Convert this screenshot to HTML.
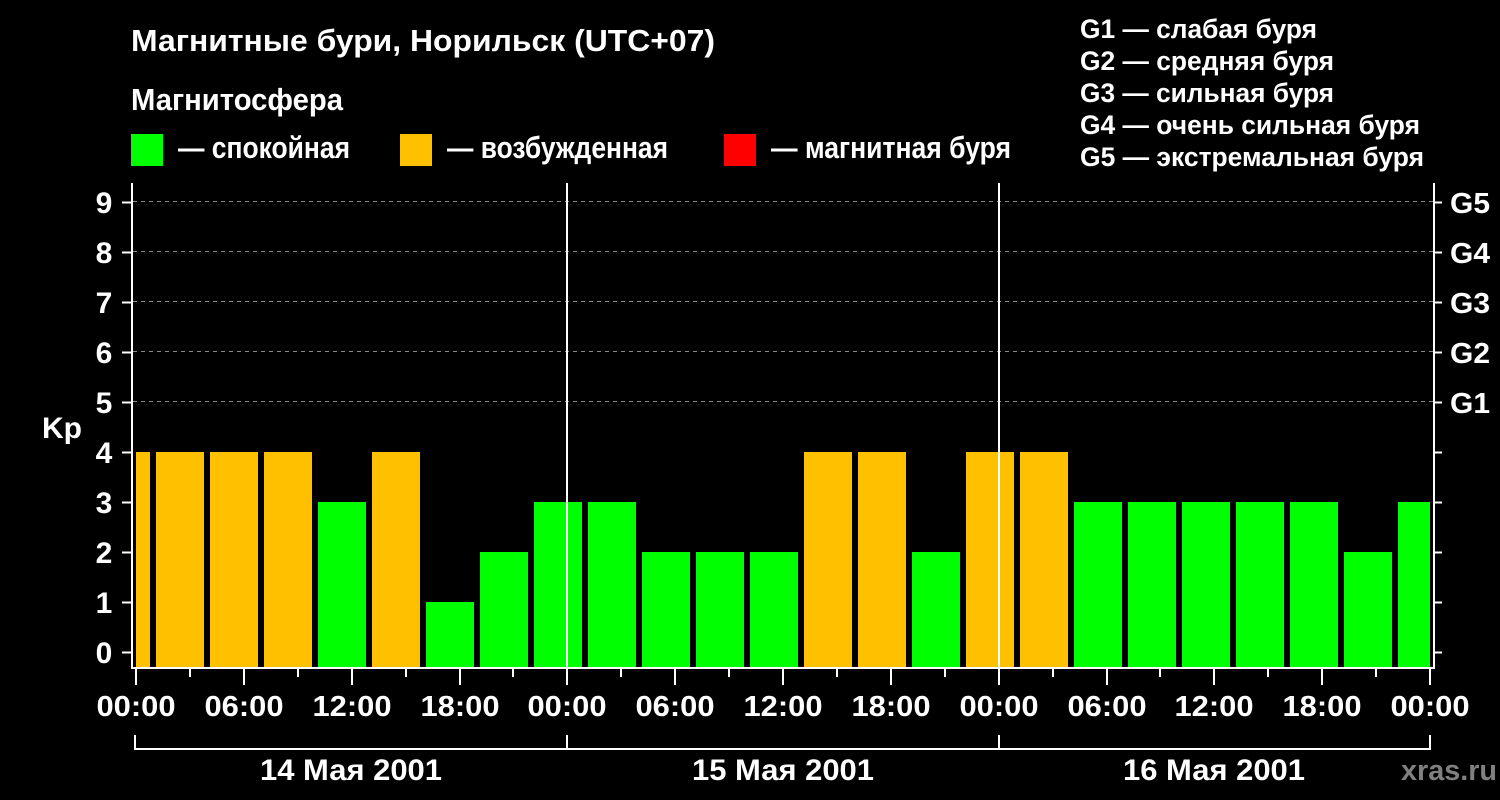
<!DOCTYPE html>
<html><head><meta charset="utf-8"><style>html,body{margin:0;background:#000;}svg{display:block}</style></head><body>
<svg width="1500" height="800" xmlns="http://www.w3.org/2000/svg" font-family="'Liberation Sans', Arial, sans-serif" font-weight="bold">
<rect width="1500" height="800" fill="#000"/>
<g fill="#fff" font-size="31">
<text x="131" y="51" textLength="584" lengthAdjust="spacingAndGlyphs">Магнитные бури, Норильск (UTC+07)</text>
<text x="131" y="110" textLength="212" lengthAdjust="spacingAndGlyphs">Магнитосфера</text>
<text x="178" y="158" textLength="172" lengthAdjust="spacingAndGlyphs">— спокойная</text>
<text x="447" y="158" textLength="221" lengthAdjust="spacingAndGlyphs">— возбужденная</text>
<text x="771" y="158" textLength="240" lengthAdjust="spacingAndGlyphs">— магнитная буря</text>
</g>
<g fill="#fff" font-size="27">
<text x="1080" y="38" textLength="237" lengthAdjust="spacingAndGlyphs">G1 — слабая буря</text>
<text x="1080" y="70" textLength="254" lengthAdjust="spacingAndGlyphs">G2 — средняя буря</text>
<text x="1080" y="102" textLength="254" lengthAdjust="spacingAndGlyphs">G3 — сильная буря</text>
<text x="1080" y="134" textLength="340" lengthAdjust="spacingAndGlyphs">G4 — очень сильная буря</text>
<text x="1080" y="166" textLength="344" lengthAdjust="spacingAndGlyphs">G5 — экстремальная буря</text>
</g>
<rect x="131" y="134" width="32" height="32" fill="#00ff00"/>
<rect x="400" y="134" width="32" height="32" fill="#ffc000"/>
<rect x="724" y="134" width="32" height="32" fill="#ff0000"/>
<g stroke="#888" stroke-dasharray="4,4" stroke-width="1">
<line x1="133" x2="1433" y1="201.5" y2="201.5"/><line x1="133" x2="1433" y1="251.5" y2="251.5"/>
<line x1="133" x2="1433" y1="301.5" y2="301.5"/><line x1="133" x2="1433" y1="351.5" y2="351.5"/>
<line x1="133" x2="1433" y1="401.5" y2="401.5"/>
</g>
<g>
<rect x="136" y="452" width="14" height="215" fill="#ffc000"/>
<rect x="156" y="452" width="48" height="215" fill="#ffc000"/>
<rect x="210" y="452" width="48" height="215" fill="#ffc000"/>
<rect x="264" y="452" width="48" height="215" fill="#ffc000"/>
<rect x="318" y="502" width="48" height="165" fill="#00ff00"/>
<rect x="372" y="452" width="48" height="215" fill="#ffc000"/>
<rect x="426" y="602" width="48" height="65" fill="#00ff00"/>
<rect x="480" y="552" width="48" height="115" fill="#00ff00"/>
<rect x="534" y="502" width="48" height="165" fill="#00ff00"/>
<rect x="588" y="502" width="48" height="165" fill="#00ff00"/>
<rect x="642" y="552" width="48" height="115" fill="#00ff00"/>
<rect x="696" y="552" width="48" height="115" fill="#00ff00"/>
<rect x="750" y="552" width="48" height="115" fill="#00ff00"/>
<rect x="804" y="452" width="48" height="215" fill="#ffc000"/>
<rect x="858" y="452" width="48" height="215" fill="#ffc000"/>
<rect x="912" y="552" width="48" height="115" fill="#00ff00"/>
<rect x="966" y="452" width="48" height="215" fill="#ffc000"/>
<rect x="1020" y="452" width="48" height="215" fill="#ffc000"/>
<rect x="1074" y="502" width="48" height="165" fill="#00ff00"/>
<rect x="1128" y="502" width="48" height="165" fill="#00ff00"/>
<rect x="1182" y="502" width="48" height="165" fill="#00ff00"/>
<rect x="1236" y="502" width="48" height="165" fill="#00ff00"/>
<rect x="1290" y="502" width="48" height="165" fill="#00ff00"/>
<rect x="1344" y="552" width="48" height="115" fill="#00ff00"/>
<rect x="1398" y="502" width="32" height="165" fill="#00ff00"/>
</g>
<g stroke="#fff" stroke-width="2" fill="none">
<polyline points="132,183 132,668 1434,668 1434,183"/>
<line x1="567" y1="183" x2="567" y2="668"/><line x1="999" y1="183" x2="999" y2="668"/>
<polyline points="135,735 135,749 1430,749 1430,735"/>
<line x1="567" y1="735" x2="567" y2="749"/><line x1="999" y1="735" x2="999" y2="749"/>
</g>
<g stroke="#fff" stroke-width="2">
<path d="M122 652.5h10M122 602.5h10M122 552.5h10M122 502.5h10M122 452.5h10M122 402.5h10M122 352.5h10M122 302.5h10M122 252.5h10M122 202.5h10"/>
<path d="M1434 652.5h8M1434 602.5h8M1434 552.5h8M1434 502.5h8M1434 452.5h8M1434 402.5h8M1434 352.5h8M1434 302.5h8M1434 252.5h8M1434 202.5h8"/>
<path d="M136 669v16M244 669v16M352 669v16M460 669v16M567 669v16M675 669v16M783 669v16M891 669v16M999 669v16M1107 669v16M1214 669v16M1322 669v16M1430 669v16"/>
<path d="M190 669v8M298 669v8M406 669v8M513 669v8M621 669v8M729 669v8M837 669v8M945 669v8M1053 669v8M1160 669v8M1268 669v8M1376 669v8"/>
</g>
<g fill="#fff" font-size="30" text-anchor="middle">
<text x="104" y="663">0</text><text x="104" y="613">1</text><text x="104" y="563">2</text><text x="104" y="513">3</text><text x="104" y="463">4</text>
<text x="104" y="413">5</text><text x="104" y="363">6</text><text x="104" y="313">7</text><text x="104" y="263">8</text><text x="104" y="213">9</text>
</g>
<g fill="#fff" font-size="29">
<text x="1450" y="413" textLength="40" lengthAdjust="spacingAndGlyphs">G1</text><text x="1450" y="363" textLength="40" lengthAdjust="spacingAndGlyphs">G2</text><text x="1450" y="313" textLength="40" lengthAdjust="spacingAndGlyphs">G3</text><text x="1450" y="263" textLength="40" lengthAdjust="spacingAndGlyphs">G4</text><text x="1450" y="213" textLength="40" lengthAdjust="spacingAndGlyphs">G5</text>
</g>
<g fill="#fff" font-size="29" text-anchor="middle">
<text x="136" y="716" textLength="79" lengthAdjust="spacingAndGlyphs">00:00</text><text x="244" y="716" textLength="79" lengthAdjust="spacingAndGlyphs">06:00</text><text x="352" y="716" textLength="79" lengthAdjust="spacingAndGlyphs">12:00</text><text x="460" y="716" textLength="79" lengthAdjust="spacingAndGlyphs">18:00</text>
<text x="567" y="716" textLength="79" lengthAdjust="spacingAndGlyphs">00:00</text><text x="675" y="716" textLength="79" lengthAdjust="spacingAndGlyphs">06:00</text><text x="783" y="716" textLength="79" lengthAdjust="spacingAndGlyphs">12:00</text><text x="891" y="716" textLength="79" lengthAdjust="spacingAndGlyphs">18:00</text>
<text x="999" y="716" textLength="79" lengthAdjust="spacingAndGlyphs">00:00</text><text x="1107" y="716" textLength="79" lengthAdjust="spacingAndGlyphs">06:00</text><text x="1214" y="716" textLength="79" lengthAdjust="spacingAndGlyphs">12:00</text><text x="1322" y="716" textLength="79" lengthAdjust="spacingAndGlyphs">18:00</text>
<text x="1430" y="716" textLength="79" lengthAdjust="spacingAndGlyphs">00:00</text>
</g>
<text x="42" y="438" fill="#fff" font-size="30">Kp</text>
<g fill="#fff" font-size="30" text-anchor="middle">
<text x="351" y="780" textLength="182" lengthAdjust="spacingAndGlyphs">14 Мая 2001</text><text x="783" y="780" textLength="182" lengthAdjust="spacingAndGlyphs">15 Мая 2001</text><text x="1214" y="780" textLength="182" lengthAdjust="spacingAndGlyphs">16 Мая 2001</text>
</g>
<text x="1449" y="780" fill="#808080" font-size="29" text-anchor="middle" textLength="96" lengthAdjust="spacingAndGlyphs">xras.ru</text>
</svg>
</body></html>
